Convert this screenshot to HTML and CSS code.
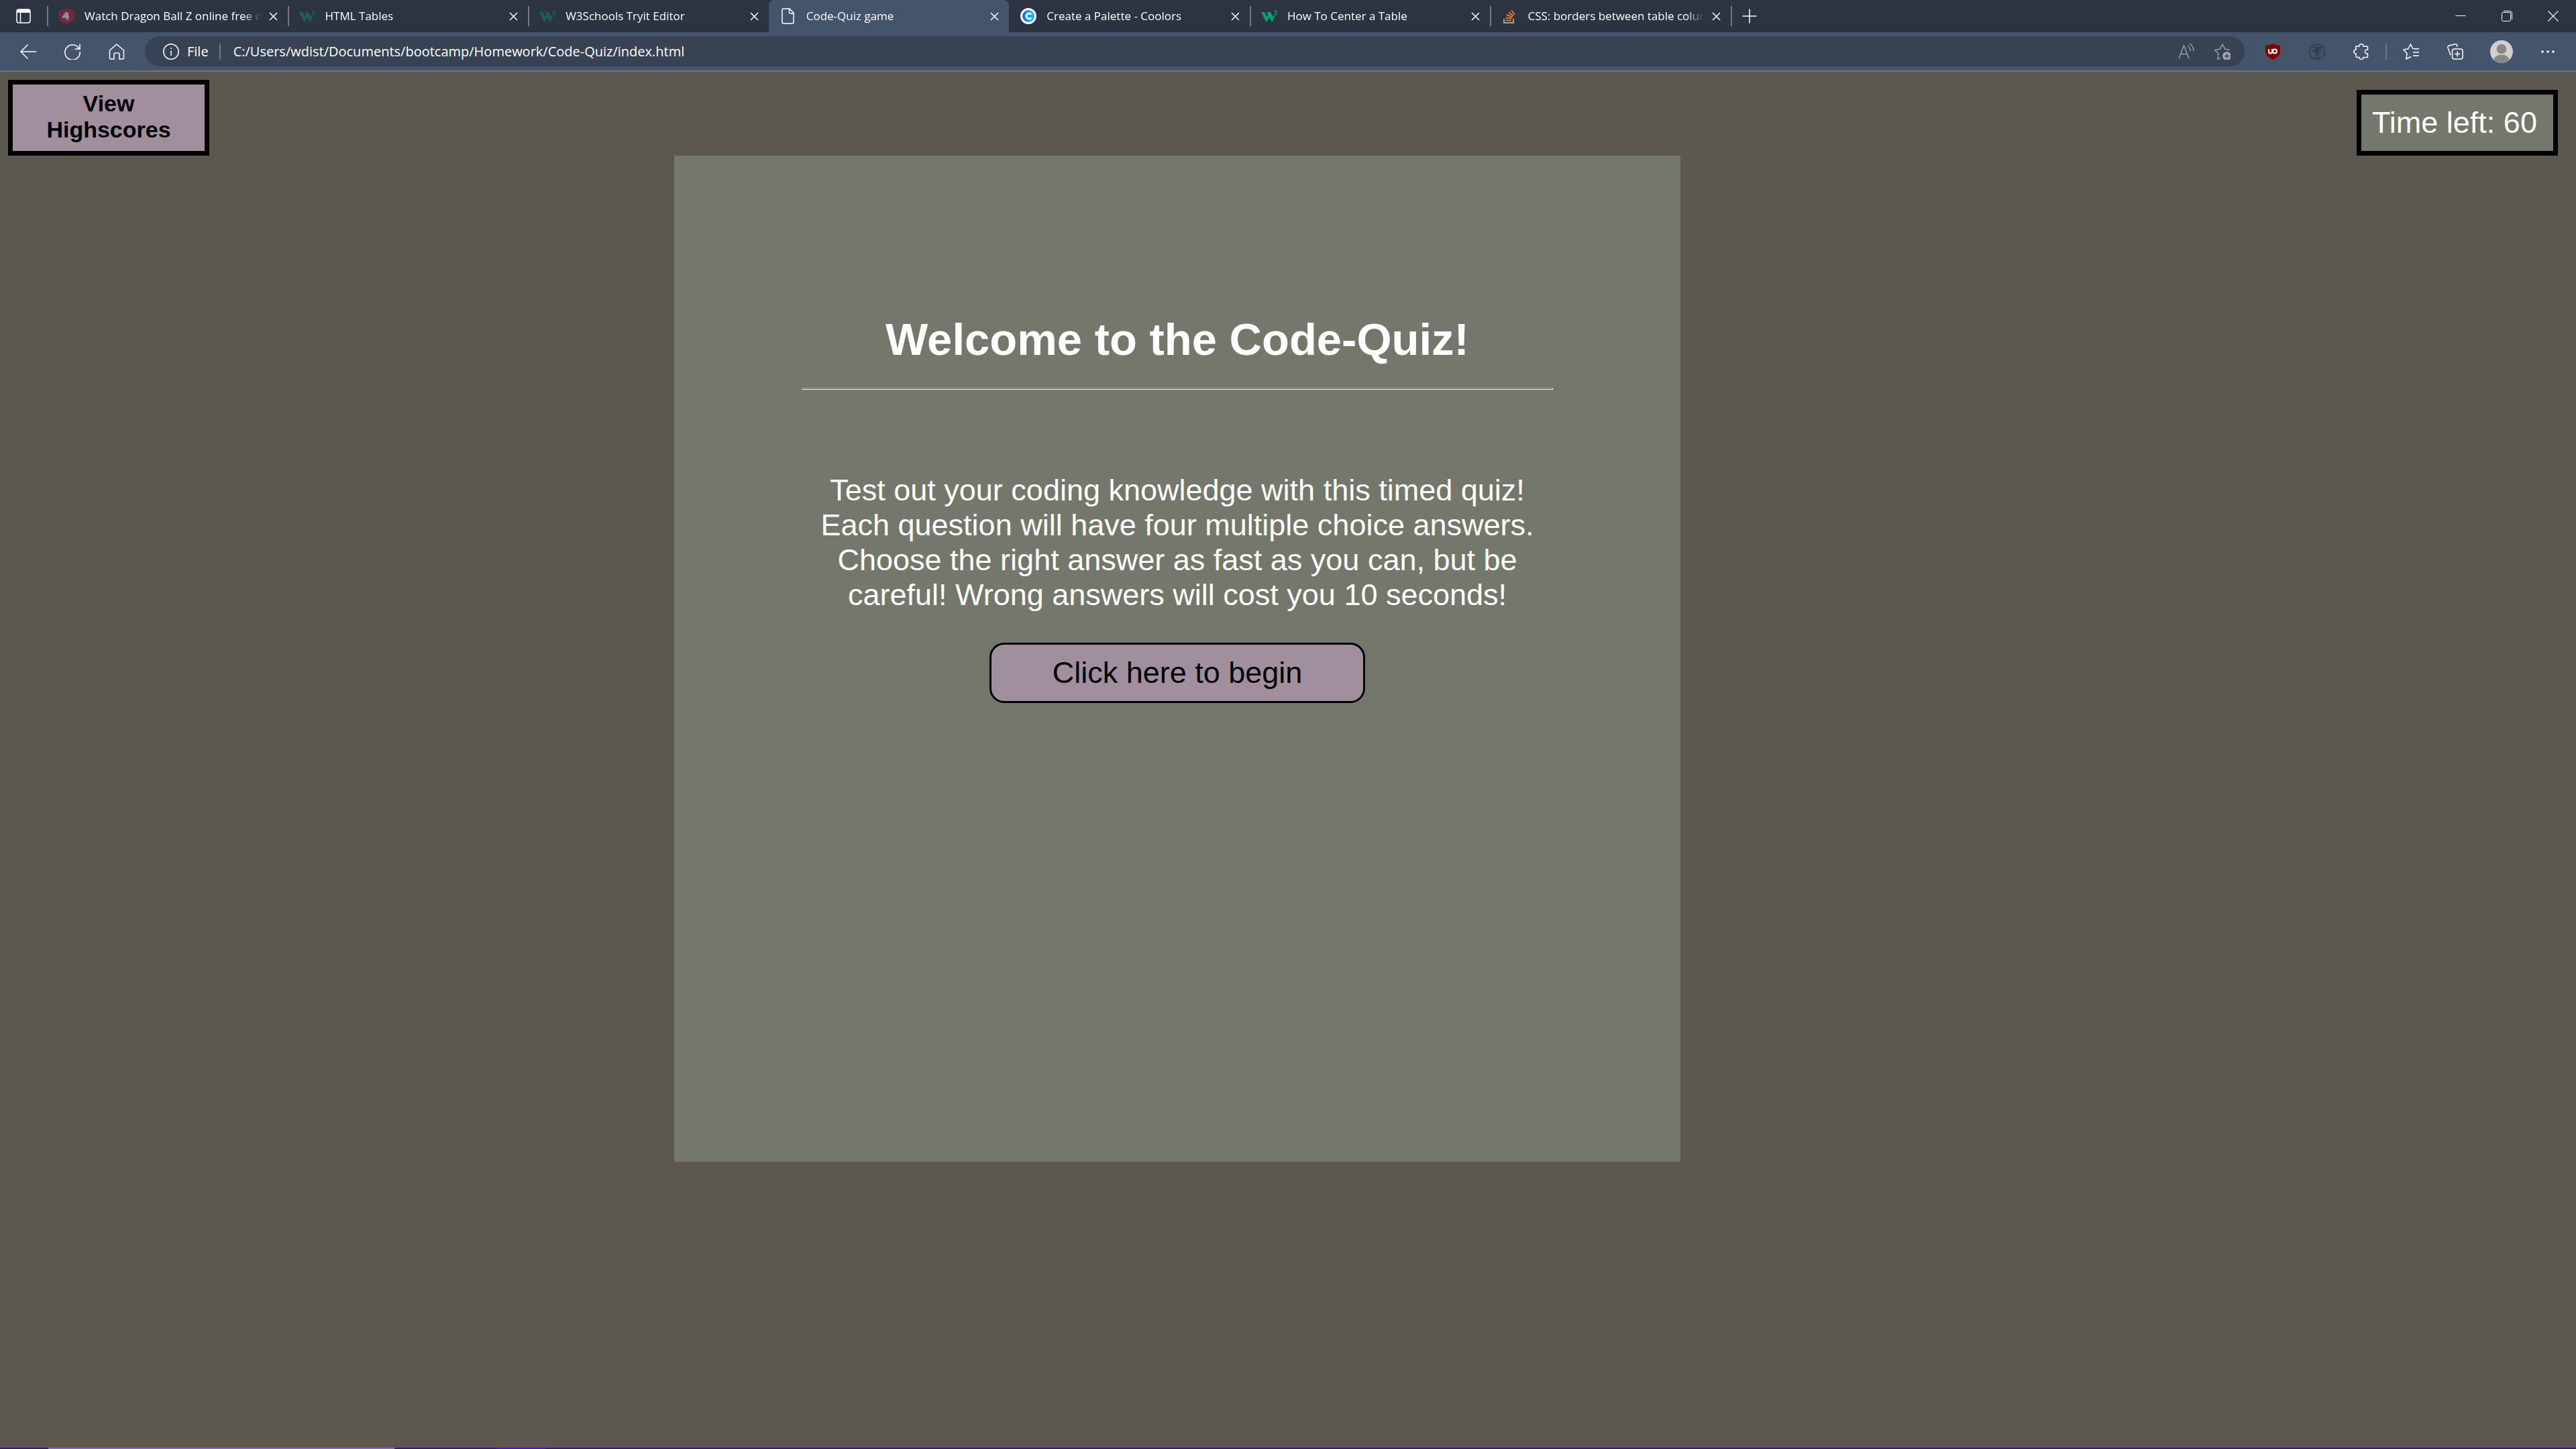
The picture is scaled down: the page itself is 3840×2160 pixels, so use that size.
FILE: index.html
```html
<!DOCTYPE html>
<html lang="en">
<head>
<meta charset="utf-8">
<title>Code-Quiz game</title>
<link rel="stylesheet" href="styles.css">
</head>
<body>
<svg class="defs" aria-hidden="true">
  <symbol id="x" viewBox="0 0 13 13"><path d="M1 1 12 12M12 1 1 12" fill="none" stroke="currentColor" stroke-width="1.5"/></symbol>
  <symbol id="w3" viewBox="0 0 24 24"><path d="M0 6h5l3.500 7 1.500-3-1.500-4h5.500l3.500 7 1.500-2 1.500 1-3.500 8h-1.500L12 14l-3.500 6H7z" fill="currentColor"/><path d="M19.500 4.500H23l-2 2.500q2.500.5 1.800 2.300-1 1.500-3.300.5" fill="none" stroke="currentColor" stroke-width="1.300"/></symbol>
</svg>
<div class="tabstrip">
  <button class="tab-actions" aria-label="Tab actions"><svg width="22" height="22" viewBox="0 0 22 22"><rect x="1" y="1" width="20" height="20" rx="3" fill="none" stroke="#fff" stroke-width="1.5"/><path d="M1 6V4q0-3 3-3h14q3 0 3 3v2z" fill="#fff"/><path d="M6.500 6v15" stroke="#fff" stroke-width="1.500"/></svg></button>
  <nav class="tabs" aria-label="Tabs">
    <div class="tab"><svg class="fav" viewBox="0 0 24 24"><path d="M12 0 24 4.500 22.500 19 12 24 1.500 19 0 4.500z" fill="#6f2a3b"/><path d="M12.500 6.500 8 13h8M13.500 7v10.500" fill="none" stroke="#8b8d98" stroke-width="3.500"/></svg><a href="#" class="tab-title">Watch Dragon Ball Z online free on</a><button class="close" aria-label="Close tab"><svg><use href="#x"/></svg></button></div>
    <div class="tab"><svg class="fav dim"><use href="#w3"/></svg><a href="#" class="tab-title">HTML Tables</a><button class="close" aria-label="Close tab"><svg><use href="#x"/></svg></button></div>
    <div class="tab"><svg class="fav dim"><use href="#w3"/></svg><a href="#" class="tab-title">W3Schools Tryit Editor</a><button class="close" aria-label="Close tab"><svg><use href="#x"/></svg></button></div>
    <div class="tab active"><svg class="fav" viewBox="0 0 24 24"><path d="M6 1h8l6 6v14q0 2-2 2H5q-2 0-2-2V3q0-2 2-2zM13.500 1v5q0 2 2 2H20" fill="none" stroke="#fff" stroke-width="1.500"/></svg><a href="#" class="tab-title">Code-Quiz game</a><button class="close" aria-label="Close tab"><svg><use href="#x"/></svg></button></div>
    <div class="tab"><svg class="fav" viewBox="0 0 24 24"><defs><linearGradient id="coolors"><stop offset="0" stop-color="#0a6cff"/><stop offset="1" stop-color="#10c8ff"/></linearGradient></defs><circle cx="12" cy="12" r="12" fill="#fff"/><circle cx="12" cy="12" r="9" fill="url(#coolors)"/><path d="M16 9.500a4 4 0 1 0 0 5" fill="none" stroke="#fff" stroke-width="3"/></svg><a href="#" class="tab-title">Create a Palette - Coolors</a><button class="close" aria-label="Close tab"><svg><use href="#x"/></svg></button></div>
    <div class="tab"><svg class="fav green"><use href="#w3"/></svg><a href="#" class="tab-title">How To Center a Table</a><button class="close" aria-label="Close tab"><svg><use href="#x"/></svg></button></div>
    <div class="tab"><svg class="fav" viewBox="0 0 24 24"><path d="M4 16v6h14v-6" fill="none" stroke="#a0a3a6" stroke-width="2"/><path d="M6.500 18.500H15M6.500 14.500l9 1M8 10l8.500 3.500M11 6l7 6M15 3l5 7" fill="none" stroke="#e87922" stroke-width="2"/></svg><a href="#" class="tab-title">CSS: borders between table columns</a><button class="close" aria-label="Close tab"><svg><use href="#x"/></svg></button></div>
  </nav>
  <button class="new-tab" aria-label="New tab"><svg width="22" height="22" viewBox="0 0 22 22"><path d="M11 .5v21M.5 11h21" stroke="#fff" stroke-width="1.500"/></svg></button>
  <div class="window-controls">
    <button aria-label="Minimize"><svg width="16" height="16" viewBox="0 0 16 16"><path d="M.5 7.500h15" stroke="#fff"/></svg></button>
    <button aria-label="Restore"><svg width="16" height="16" viewBox="0 0 16 16"><rect x=".5" y="2.500" width="13" height="13" rx="2" fill="none" stroke="#fff"/><path d="M3 .5h9q3.500 0 3.500 3.500v9" fill="none" stroke="#fff"/></svg></button>
    <button aria-label="Close"><svg width="16" height="16" viewBox="0 0 16 16"><path d="M.5.5l15 15M15.500.5l-15 15" stroke="#fff" stroke-width="1.200"/></svg></button>
  </div>
</div>
<div class="toolbar">
  <div class="nav-buttons">
    <button aria-label="Back"><svg viewBox="0 0 24 24"><path d="M24 12H1M11.500 1.500 1 12l10.500 10.500"/></svg></button>
    <button aria-label="Refresh"><svg viewBox="0 0 24 24"><path d="M22.500 9A11.200 11.200 0 1 0 23.200 12M23 .5V8h-7.500"/></svg></button>
    <button aria-label="Home"><svg viewBox="0 0 24 24"><path d="M1.500 10 12 1l10.500 9v11.500q0 1.500-1.500 1.500h-5v-7q0-2-2-2h-4q-2 0-2 2v7H3q-1.500 0-1.500-1.500z"/></svg></button>
  </div>
  <div class="address">
    <svg class="info" viewBox="0 0 24 24"><circle cx="12" cy="12" r="11.200"/><path d="M12 10.500V18M12 6v2"/></svg>
    <label for="url">File</label>
    <input id="url" type="text" value="C:/Users/wdist/Documents/bootcamp/Homework/Code-Quiz/index.html">
    <button class="muted" aria-label="Read aloud"><svg viewBox="0 0 24 24"><path d="M1 22 8.500 3 16 22M3.500 15.500h10M14 3q4 3 4 8M17 0q6 4 6 11"/></svg></button>
    <button class="muted" aria-label="Add to favorites"><svg viewBox="0 0 24 24"><path d="M9 21.500 5 23l.8-8L.8 9.500l7.400-1.300L12 1l3.800 7.200 7.400 1.300"/><circle cx="18.500" cy="18.500" r="6.500" fill="#a0a4aa" stroke="none"/><path d="M18.500 15v7M15 18.500h7" stroke="#374252"/></svg></button>
  </div>
  <div class="tools">
    <button aria-label="uBlock Origin"><svg viewBox="0 0 24 24"><path d="M12 0q5 3 11 3v8q0 8-11 13Q1 19 1 11V3q6 0 11-3z" fill="#800000" stroke="none"/><path d="M6 8v4q0 2.500 2.500 2.500T11 12V8" stroke-width="2"/><circle cx="15" cy="11.500" r="3" stroke-width="2"/></svg></button>
    <button aria-label="Palm extension"><svg class="palm" viewBox="0 0 24 24"><circle cx="12" cy="12" r="11.200"/><path d="M11.500 9q-1 8-1 14M13 9q1 8 1 14M12 8Q8 3 5 6M12 8q4-5 7-2M12 8q-6 0-7 5M12 8q6 0 7 5M12 8q-3 3-3 6M12 8q3 3 3 6M12 8V4"/></svg></button>
    <button aria-label="Extensions"><svg viewBox="0 0 24 24"><path d="M4 4h5q-.5-3.200 3-3.200T15 4h5q1.500 0 1.500 1.500V9q-4-.5-4 3t4 3v4q0 1.500-1.500 1.500h-5q0 3-3 3t-3-3H5.500Q4 20.500 4 19v-4Q1 15 1 12t3-3z"/></svg></button>
    <span class="rule"></span>
    <button aria-label="Favorites"><svg viewBox="0 0 24 24"><path d="M12 19.500 5 23l1-8.500L.8 9l7-1.200L11.500 1 15 7.800M15.500 7.800H24M15 13h9M15 18h9"/></svg></button>
    <button aria-label="Collections"><svg viewBox="0 0 24 24"><rect x="7.500" y="8" width="15.500" height="15" rx="3"/><path d="M15.200 11.500v8M11.200 15.500h8M5 17 1 6q-.5-2 1.500-3L12 .8q2-.5 2.500 1.500L15.200 5"/></svg></button>
    <button class="profile" aria-label="Profile"><svg class="avatar" viewBox="0 0 34 34"><circle cx="17" cy="17" r="17" fill="#d2d0ce" stroke="none"/><circle cx="17" cy="13" r="7.300" fill="#8a8886" stroke="none"/><path d="M5.500 29q2-7.500 11.500-7.500T28.500 29Q24 34 17 34T5.500 29z" fill="#8a8886" stroke="none"/></svg></button>
    <button aria-label="Settings and more"><svg viewBox="0 0 24 24"><g fill="#fff" stroke="none"><circle cx="4" cy="12" r="1.800"/><circle cx="12" cy="12" r="1.800"/><circle cx="20" cy="12" r="1.800"/></g></svg></button>
  </div>
</div>
<div class="page">
  <header class="page-header">
    <button class="scores">View Highscores</button>
    <div class="timer">Time left: 60</div>
  </header>
  <main class="page-main">
    <section class="card">
      <h1>Welcome to the Code-Quiz!</h1>
      <hr>
      <p>Test out your coding knowledge with this timed quiz! Each question will have four multiple choice answers. Choose the right answer as fast as you can, but be careful! Wrong answers will cost you 10 seconds!</p>
      <button class="begin">Click here to begin</button>
    </section>
  </main>
</div>
<div class="taskbar-edge"><span class="edge-search"></span><span class="edge-app"></span></div>
</body>
</html>
```
FILE: styles.css
```css
* { box-sizing: border-box; }
body {
  margin: 0;
  min-height: 100vh;
  display: flex;
  flex-direction: column;
  background: #5c574f;
  color: #fff;
  font-family: "Liberation Sans", Arial, sans-serif;
}
button {
  margin: 0;
  padding: 0;
  border: 0;
  background: none;
  color: inherit;
  font: inherit;
}
svg { display: block; }
.defs { width: 0; height: 0; position: absolute; }

/* Tab strip */
.tabstrip {
  display: flex;
  height: 48px;
  background: #2b3440;
  border-bottom: 1px solid #252e3a;
  font: 17px/24px "Open Sans", sans-serif;
}
.tab-actions { width: 70px; display: grid; place-items: center; }
.tabs { display: flex; flex: 0 1 2510px; }
.tab {
  flex: 1 1 0;
  min-width: 0;
  height: 48px;
  display: flex;
  align-items: center;
  padding: 0 15px 0 17px;
}
.tab, .new-tab {
  background: linear-gradient(#727a84, #727a84) left center / 2px 30px no-repeat;
}
.tab.active { background: #44546a; border-radius: 8px 8px 0 0; }
.tab.active + .tab { background: none; }
.fav { width: 24px; height: 24px; flex: none; }
.fav.dim { color: #1a6152; }
.fav.green { color: #06a26c; }
.tab-title {
  flex: 1;
  margin: 0 12px 0 15px;
  overflow: hidden;
  white-space: nowrap;
  color: #fff;
  text-decoration: none;
  -webkit-mask-image: linear-gradient(to right, #000 90%, transparent);
  mask-image: linear-gradient(to right, #000 90%, transparent);
}
.close svg { width: 13px; height: 13px; }
.new-tab { width: 56px; display: grid; place-items: center; }
.window-controls { margin-left: auto; display: flex; }
.window-controls button { width: 69px; display: grid; place-items: center; }

/* Toolbar */
.toolbar {
  display: flex;
  align-items: center;
  height: 59px;
  background: #44546a;
  border-bottom: 2px solid #6c7889;
}
.toolbar svg { width: 24px; height: 24px; fill: none; stroke: #fff; stroke-width: 1.5; }
.nav-buttons { width: 216px; display: flex; gap: 42px; padding-left: 30px; }
.address {
  flex: 1;
  height: 45px;
  display: flex;
  align-items: center;
  padding: 0 21px 0 27px;
  border-radius: 23px;
  background: #374252;
  font: 20px/28px "Open Sans", sans-serif;
}
.address label {
  margin-left: 12px;
  padding-right: 16px;
  line-height: 24px;
  border-right: 2px solid #6c7889;
}
.address input {
  flex: 1;
  margin-left: 19px;
  padding: 0;
  border: 0;
  outline: 0;
  background: none;
  color: #fff;
  font: inherit;
}
.address .muted { margin-left: 30px; }
.address .muted svg { stroke: #9a9fa6; }
.tools { display: flex; align-items: center; gap: 42px; padding: 0 30px; }
.toolbar .palm { stroke: #343b44; }
.profile { margin: 0 -2px; }
.toolbar .avatar { width: 34px; height: 34px; }
.rule { width: 2px; height: 24px; margin: 0 -18px; background: #6c7889; }

/* Quiz page */
.page { flex: 1; }
.page-header {
  display: flex;
  justify-content: space-between;
  align-items: flex-end;
  padding: 12px 27px 0 12px;
}
.scores {
  width: 300px;
  height: 113px;
  padding: 0 40px 4px;
  border: 7px solid #000;
  background: #a18f9d;
  color: #000;
  font-weight: bold;
  font-size: 34px;
  line-height: 39px;
}
.timer {
  width: 300px;
  padding: 16px;
  border: 7px solid #000;
  background: #73776c;
  font-size: 45px;
  line-height: 52px;
}
.page-main { display: flex; justify-content: center; padding-right: 330px; }
.card {
  width: 1500px;
  min-height: 1500px;
  padding: 235px 190px 0;
  background: #73776c;
  text-align: center;
}
.card h1 { margin: 0; font-size: 67px; line-height: 78px; }
.card hr {
  height: 3px;
  margin: 33px 0 124px;
  border: 1px solid;
  border-color: #9a9a9a #eee #eee #9a9a9a;
  background: #767276;
}
.card p { margin: 0 auto 45px; width: 1080px; font-size: 45px; line-height: 52px; }
.begin {
  width: 560px;
  height: 90px;
  border: 3px solid #000;
  border-radius: 22px;
  background: #a18f9d;
  color: #000;
  font-size: 45px;
}

/* Hidden taskbar's visible edge */
.taskbar-edge { display: flex; height: 2px; padding-left: 72px; gap: 152px; background: #3e1478; }
.edge-search { width: 516px; background: #8f62c0; }
.edge-app { width: 73px; background: #5a12b8; }
```
